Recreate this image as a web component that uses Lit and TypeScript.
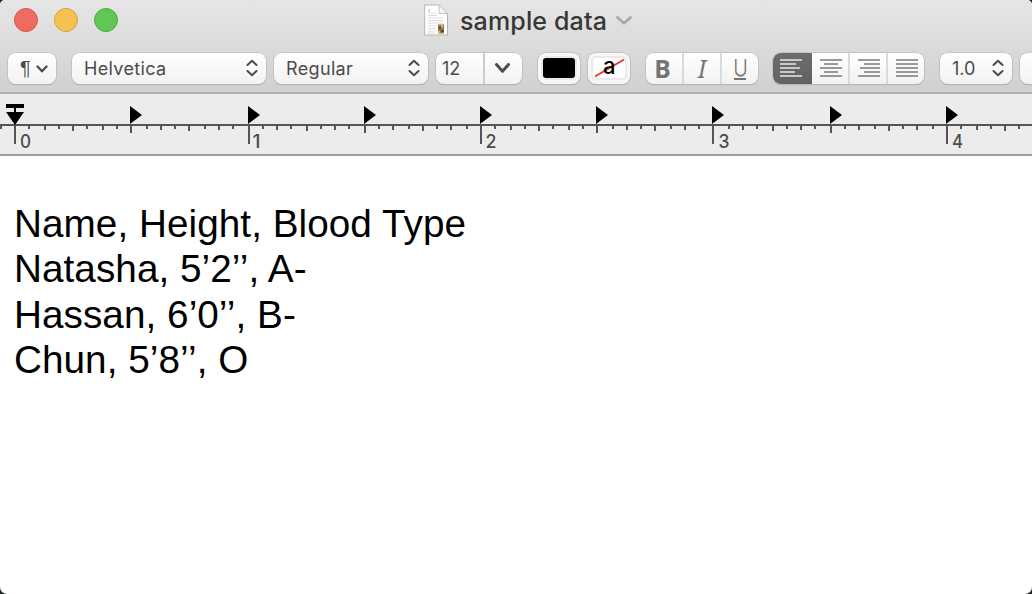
import { LitElement, html, svg, css } from "lit";
import { customElement } from "lit/decorators.js";

const INCH = 233;
const ORIGIN = 14;

// Snap to the 2px device grid, ties going to the even step.
const snap = (v: number) => {
  const h = v / 2;
  const f = Math.floor(h);
  if (h - f === 0.5) return 2 * (f % 2 === 0 ? f : f + 1);
  return 2 * Math.round(h);
};

@customElement("ruler-bar")
class RulerBar extends LitElement {
  static styles = css`
    :host { display: block; height: 62px; background: #ececec; border-bottom: 2px solid #9f9f9f; }
    svg { display: block; }
    text { font: 500 18px Inter, sans-serif; fill: #4c4c4c; }
  `;
  render() {
    const ticks = [];
    const stops = [];
    const labels = [];
    for (let i = -1; i <= 70; i++) {
      const x = Math.max(0, snap(ORIGIN + (i * INCH) / 16));
      const h = i % 16 === 0 ? 18 : i % 8 === 0 ? 7 : i % 4 === 0 ? 5 : i % 2 === 0 ? 4 : 3;
      ticks.push(svg`<rect x=${x} y="32" width="2" height=${h} />`);
      if (i > 0 && i % 8 === 0) stops.push(svg`<path d="M${x} 12v18l12-9z" />`);
      if (i % 16 === 0) {
        labels.push(svg`<text x=${x + (i === 16 ? 4.5 : i === 48 ? 6.5 : i === 32 ? 5.5 : 6)} y="54" textLength=${i === 16 ? 8 : 11} lengthAdjust="spacingAndGlyphs">${i / 16}</text>`);
      }
    }
    return html`<svg width="1032" height="60" shape-rendering="crispEdges">
      <g fill="#555"><rect x="0" y="30" width="1032" height="2" />${ticks}</g>
      <g fill="#000" shape-rendering="geometricPrecision">${stops}
        <path d="M6 10h18v4h-8v4h8L15 31 6 18h8v-4H6z" />
      </g>
      ${labels}
    </svg>`;
  }
}

const updown = html`<svg class="updown" width="12" height="18" viewBox="0 0 12 18"><path d="M1.500 6 6 1.700 10.500 6M1.500 12 6 16.300 10.500 12" /></svg>`;
const chevron = (w: number, h: number) => html`<svg class="chev" width=${w} height=${h}><path d="M1.500 1.500 L${w / 2} ${h - 1.7} L${w - 1.5} 1.500" /></svg>`;

const WIDTHS: Record<string, number[]> = {
  left: [22, 16, 20, 15, 22],
  center: [22, 14, 22, 14, 22],
  right: [22, 16, 20, 16, 22],
  full: [22, 22, 22, 22, 22],
};
const alignIcon = (kind: string) =>
  WIDTHS[kind].map((w, i) => {
    const x = kind === "center" ? (22 - w) / 2 : kind === "right" ? 22 - w : 0;
    return svg`<rect x=${x} y=${i * 4} width=${w} height="2" />`;
  });

@customElement("app-root")
class AppRoot extends LitElement {
  static styles = css`
    * { box-sizing: border-box; }
    :host { display: block; width: 1032px; height: 594px; overflow: hidden; background: #222a26; font-family: Inter, sans-serif; }
    .window { height: 594px; background: #fff; border-radius: 5px 5px 7px 7px; overflow: hidden; }
    .chrome { height: 94px; background: linear-gradient(#e7e6e7, #d0d0d0); border-bottom: 2px solid #b0b0b0; }
    .titlebar { display: grid; grid-template-columns: 424px auto; height: 40px; align-items: center; }
    .lights { display: flex; gap: 16px; padding-left: 14px; }
    .light { width: 24px; height: 24px; border-radius: 50%; border: 1px solid #d9544b; background: #ed6b60; }
    .light.min { background: #f5c151; border-color: #dba03c; }
    .light.max { background: #62c655; border-color: #4bab3c; }
    .title { display: flex; align-items: center; color: #373737; font-size: 25px; font-weight: 450; }
    .title span { margin: 1px 10px 0 12px; letter-spacing: 0.14px; line-height: 32px; width: 146px; white-space: nowrap; }
    svg { display: block; fill: none; flex: none; }
    .toolbar { display: flex; padding: 12.500px 0 0 8px; width: 1080px; color: #4b4b4b; font-size: 18px; }
    .btn { display: flex; align-items: center; height: 31px; border-radius: 8px; background: linear-gradient(#fff, #f2f2f2); box-shadow: 0 0 0 0.8px #bebebe, 0 1px 1px #999; flex: none; overflow: hidden; }
    .para { width: 48px; padding: 1px 8px 0 12px; justify-content: space-between; margin-right: 16px; font: 20px "Liberation Sans", sans-serif; }
    .family { width: 194px; margin-right: 8px; }
    .style { width: 154px; margin-right: 8px; }
    .pop { padding: 0.600px 8px 0 12px; justify-content: space-between; letter-spacing: 0.35px; }
    .pop svg { margin-top: -1px; }
    .size { width: 86px; margin-right: 16px; }
    .size b { width: 49px; height: 32px; padding-left: 6px; border-right: 2px solid #ccc; font-weight: 400; line-height: 34px; }
    .size svg { margin-left: 10px; }
    .updown path { stroke: #4d4d4d; stroke-width: 2; stroke-linecap: round; stroke-linejoin: round; }
    .chev path { stroke: #4d4d4d; stroke-width: 2.300; stroke-linecap: round; stroke-linejoin: round; }
    .size .chev path { stroke-width: 3; }
    .title .chev path { stroke: #aaa; stroke-width: 2.800; }
    .well { width: 42px; justify-content: center; margin-right: 8px; background: #f7f7f7; }
    .swatch { width: 36px; height: 24px; border-radius: 5px; background: #000; border: 2px solid #eaeaea; }
    .swatch.none { background: #fff; }
    .swatch.none text { font: 500 22.500px Inter, sans-serif; fill: #000; }
    .fmt { width: 112px; margin: 0 16px 0 8px; }
    .seg { height: 32px; display: flex; align-items: center; justify-content: center; border-right: 2px solid #dadada; width: 38px; color: #737373; }
    .seg:last-child { border-right: 0; width: 36px; }
    .bold { font: 700 24.500px "Open Sans", sans-serif; padding-right: 3px; }
    .ital { font: italic 400 24.500px "Noto Sans", sans-serif; }
    .under { flex-direction: column; font: 300 23px/20px Inter, sans-serif; }
    .under span { transform: scaleX(0.86); padding-top: 1px; }
    .under i { width: 12px; height: 2px; background: #737373; }
    .align { width: 151px; margin-right: 16px; margin-left: -1px; }
    .align svg { fill: #999; }
    .align .seg { padding-left: 1px; }
    .align .seg.on { width: 39px; padding: 0 4px 0 0; background: linear-gradient(#6c6c6c, #626262); border-right: 0; }
    .align .on svg { fill: #c8c8c8; }
    .spacing { width: 72px; margin-right: 8px; padding-left: 12px; letter-spacing: 0; }
    .next { width: 48px; }
    .doc { margin: 0; padding: 45px 0 0 14px; font: 38.700px/45.330px "Liberation Sans", sans-serif; letter-spacing: 0.050px; color: #000; }
    .line { white-space: pre; }
  `;

  render() {
    return html`<div class="window">
      <div class="chrome">
        <div class="titlebar">
          <div class="lights"><div class="light"></div><div class="light min"></div><div class="light max"></div></div>
          <div class="title">
            <svg width="24" height="32" viewBox="0 0 24 32">
              <path d="M.7 1H15l8.500 8.500V31H.7z" fill="#fff" stroke="#b4b4b4" />
              <path d="M15 1v8.500h8.500z" fill="#f4f4f4" stroke="#c2c2c2" />
              <path d="M4 9h8M4 11.500h9M4 14h15M4 16.500h15M4 19h15M4 22h8M4 24.500h8M4 27h8M4 29h7" stroke="#dcdcdc" stroke-width="1" />
              <path d="M4 6.500h2" stroke="#edbd85" stroke-width="2" />
              <path d="M14 20.500h6v9h-6z" fill="#9a7345" /><path d="M15 23h2v2h-2zM17 26h3v2h-3z" fill="#5e4932" /><path d="M17 20.500h2v3h-2zM14 27h2v2h-2z" fill="#d6b27c" />
            </svg>
            <span>sample data</span>
            ${chevron(16, 9)}
          </div>
        </div>
        <div class="toolbar">
          <div class="btn para">¶ ${chevron(12, 8)}</div>
          <div class="btn pop family">Helvetica ${updown}</div>
          <div class="btn pop style">Regular ${updown}</div>
          <div class="btn size"><b>12</b>${chevron(15, 10)}</div>
          <div class="btn well"><div class="swatch"></div></div>
          <div class="btn well"><div class="swatch none">
            <svg width="32" height="20" overflow="visible"><path d="M2 18.500 31 1.500" stroke="#ef3829" stroke-width="2" /><text x="10" y="15.500" textLength="12.5" lengthAdjust="spacingAndGlyphs">a</text></svg>
          </div></div>
          <div class="btn fmt"><div class="seg bold">B</div><div class="seg ital">I</div><div class="seg under"><span>U</span><i></i></div></div>
          <div class="btn align">
            ${["left", "center", "right", "full"].map((k) => html`<div class="seg ${k === "left" ? "on" : ""}"><svg width="22" height="18">${alignIcon(k)}</svg></div>`)}
          </div>
          <div class="btn pop spacing">1.0 ${updown}</div>
          <div class="btn next"></div>
        </div>
      </div>
      <ruler-bar></ruler-bar>
      <div class="doc">
        <div class="line">Name, Height, Blood Type</div>
        <div class="line">Natasha, 5’2’’, A-</div>
        <div class="line">Hassan, 6’0’’, B-</div>
        <div class="line">Chun, 5’8’’, O</div>
      </div>
    </div>`;
  }
}
